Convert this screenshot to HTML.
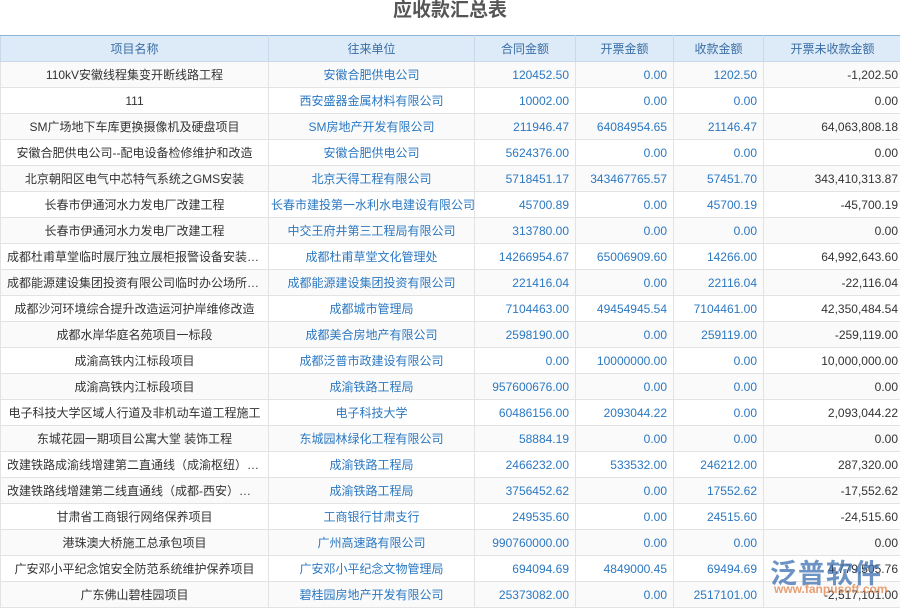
<!DOCTYPE html><html><head><meta charset="utf-8"><style>
body{margin:0;width:900px;height:600px;overflow:hidden;background:#fff;font-family:"Liberation Sans","Noto Sans CJK SC",sans-serif;font-size:12px;color:#333;position:relative}
h1{margin:0;height:34px;line-height:22px;text-align:center;font-size:19px;color:#555;font-weight:bold}
table{border-collapse:collapse;table-layout:fixed;width:901px;position:absolute;top:35px;left:0}
th{background:#ddebf8;color:#3a6ea5;font-weight:normal;height:25px;border:1px solid #c9d9ea;border-top:1px solid #8fb3d6;padding:0}
td{height:25px;border:1px solid #e3e3e3;padding:0 6px;white-space:nowrap;overflow:hidden;text-overflow:ellipsis}
td:nth-child(1){text-align:center;color:#333}
td:nth-child(2){text-align:center;color:#2b78c2;text-overflow:clip;padding:0 2px}
td:nth-child(3),td:nth-child(4),td:nth-child(5){text-align:right;color:#2b78c2}
td:nth-child(6){text-align:right;color:#333;padding-right:3px}
tr:nth-child(even) td{background:#fafafa}
.wm{position:absolute;left:770px;top:552px;color:#3b6fb0;opacity:.75;font-size:27px;font-weight:bold;letter-spacing:1px}
.wm2{position:absolute;left:774px;top:582px;color:#e07a3a;opacity:.7;font-size:12px;font-weight:bold}
</style></head><body>
<h1>应收款汇总表</h1>
<table>
<colgroup><col style="width:268px"><col style="width:206px"><col style="width:101px"><col style="width:98px"><col style="width:90px"><col style="width:138px"></colgroup>
<tr><th>项目名称</th><th>往来单位</th><th>合同金额</th><th>开票金额</th><th>收款金额</th><th>开票未收款金额</th></tr>
<tr><td>110kV安徽线程集变开断线路工程</td><td>安徽合肥供电公司</td><td>120452.50</td><td>0.00</td><td>1202.50</td><td>-1,202.50</td></tr>
<tr><td>111</td><td>西安盛器金属材料有限公司</td><td>10002.00</td><td>0.00</td><td>0.00</td><td>0.00</td></tr>
<tr><td>SM广场地下车库更换摄像机及硬盘项目</td><td>SM房地产开发有限公司</td><td>211946.47</td><td>64084954.65</td><td>21146.47</td><td>64,063,808.18</td></tr>
<tr><td>安徽合肥供电公司--配电设备检修维护和改造</td><td>安徽合肥供电公司</td><td>5624376.00</td><td>0.00</td><td>0.00</td><td>0.00</td></tr>
<tr><td>北京朝阳区电气中芯特气系统之GMS安装</td><td>北京天得工程有限公司</td><td>5718451.17</td><td>343467765.57</td><td>57451.70</td><td>343,410,313.87</td></tr>
<tr><td>长春市伊通河水力发电厂改建工程</td><td>长春市建投第一水利水电建设有限公司</td><td>45700.89</td><td>0.00</td><td>45700.19</td><td>-45,700.19</td></tr>
<tr><td>长春市伊通河水力发电厂改建工程</td><td>中交王府井第三工程局有限公司</td><td>313780.00</td><td>0.00</td><td>0.00</td><td>0.00</td></tr>
<tr><td>成都杜甫草堂临时展厅独立展柜报警设备安装工程</td><td>成都杜甫草堂文化管理处</td><td>14266954.67</td><td>65006909.60</td><td>14266.00</td><td>64,992,643.60</td></tr>
<tr><td>成都能源建设集团投资有限公司临时办公场所装修</td><td>成都能源建设集团投资有限公司</td><td>221416.04</td><td>0.00</td><td>22116.04</td><td>-22,116.04</td></tr>
<tr><td>成都沙河环境综合提升改造运河护岸维修改造</td><td>成都城市管理局</td><td>7104463.00</td><td>49454945.54</td><td>7104461.00</td><td>42,350,484.54</td></tr>
<tr><td>成都水岸华庭名苑项目一标段</td><td>成都美合房地产有限公司</td><td>2598190.00</td><td>0.00</td><td>259119.00</td><td>-259,119.00</td></tr>
<tr><td>成渝高铁内江标段项目</td><td>成都泛普市政建设有限公司</td><td>0.00</td><td>10000000.00</td><td>0.00</td><td>10,000,000.00</td></tr>
<tr><td>成渝高铁内江标段项目</td><td>成渝铁路工程局</td><td>957600676.00</td><td>0.00</td><td>0.00</td><td>0.00</td></tr>
<tr><td>电子科技大学区域人行道及非机动车道工程施工</td><td>电子科技大学</td><td>60486156.00</td><td>2093044.22</td><td>0.00</td><td>2,093,044.22</td></tr>
<tr><td>东城花园一期项目公寓大堂 装饰工程</td><td>东城园林绿化工程有限公司</td><td>58884.19</td><td>0.00</td><td>0.00</td><td>0.00</td></tr>
<tr><td>改建铁路成渝线增建第二直通线（成渝枢纽）工程</td><td>成渝铁路工程局</td><td>2466232.00</td><td>533532.00</td><td>246212.00</td><td>287,320.00</td></tr>
<tr><td>改建铁路线增建第二线直通线（成都-西安）电气化</td><td>成渝铁路工程局</td><td>3756452.62</td><td>0.00</td><td>17552.62</td><td>-17,552.62</td></tr>
<tr><td>甘肃省工商银行网络保养项目</td><td>工商银行甘肃支行</td><td>249535.60</td><td>0.00</td><td>24515.60</td><td>-24,515.60</td></tr>
<tr><td>港珠澳大桥施工总承包项目</td><td>广州高速路有限公司</td><td>990760000.00</td><td>0.00</td><td>0.00</td><td>0.00</td></tr>
<tr><td>广安邓小平纪念馆安全防范系统维护保养项目</td><td>广安邓小平纪念文物管理局</td><td>694094.69</td><td>4849000.45</td><td>69494.69</td><td>4,779,505.76</td></tr>
<tr><td>广东佛山碧桂园项目</td><td>碧桂园房地产开发有限公司</td><td>25373082.00</td><td>0.00</td><td>2517101.00</td><td>-2,517,101.00</td></tr>
</table>
<div class="wm">泛普软件</div>
<div class="wm2">www.fanpusoft.com</div>
</body></html>
